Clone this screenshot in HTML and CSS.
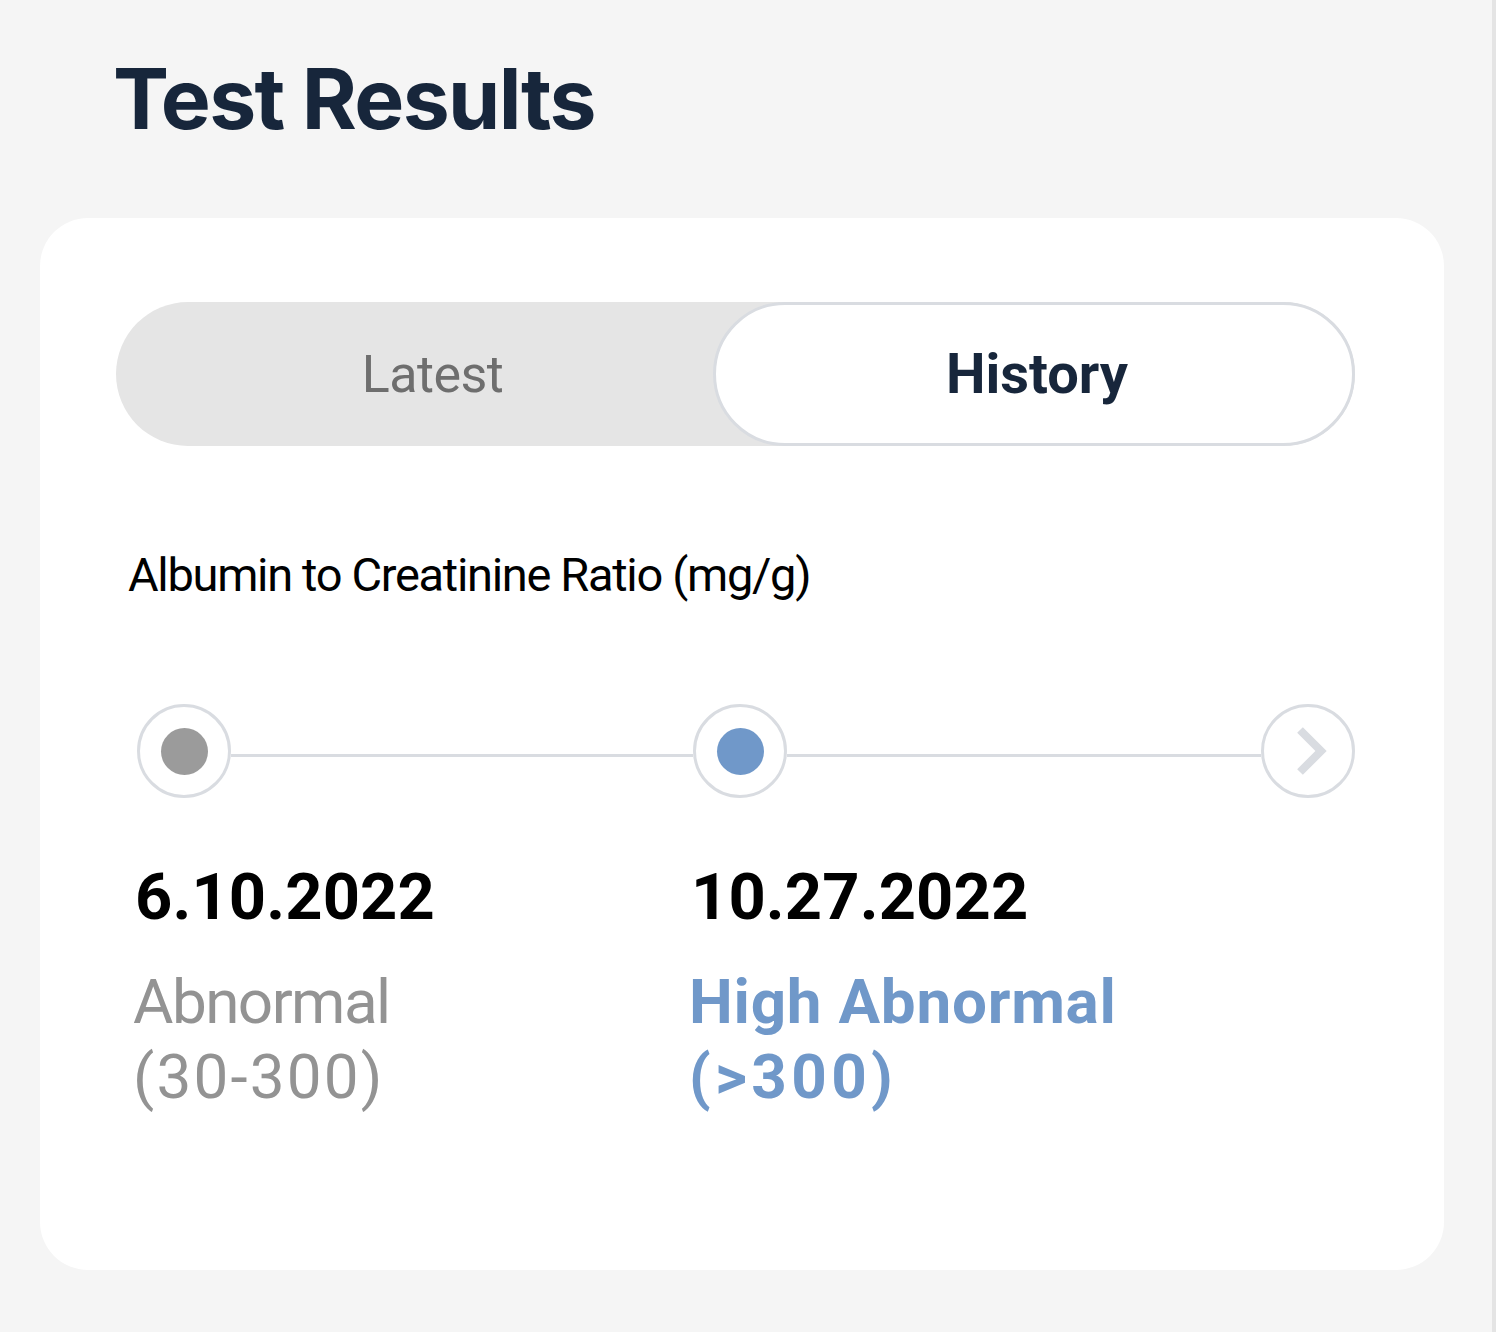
FILE: index.html
```html
<!DOCTYPE html>
<html lang="en">
<head>
<meta charset="utf-8">
<title>Test Results</title>
<link rel="stylesheet" href="styles.css">
</head>
<body>
<div class="page">
  <h1 class="title">Test Results</h1>
  <section class="card">
    <div class="toggle">
      <button class="tab">Latest</button>
      <button class="tab tab-active">History</button>
    </div>
    <p class="label">Albumin to Creatinine Ratio (mg/g)</p>
    <div class="timeline">
      <div class="node"><span class="dot dot-gray"></span></div>
      <div class="line line-first"></div>
      <div class="node"><span class="dot dot-blue"></span></div>
      <div class="line"></div>
      <div class="node node-next">
        <svg width="40" height="50" viewBox="0 0 40 50"><path d="M10 4 L31 25 L10 46" fill="none" stroke="#d9dce1" stroke-width="8"/></svg>
      </div>
    </div>
    <div class="results">
      <div class="result">
        <div class="date">6.10.2022</div>
        <div class="status">Abnormal<br><span class="range">(30-300)</span></div>
      </div>
      <div class="result">
        <div class="date">10.27.2022</div>
        <div class="status status-high">High Abnormal<br><span class="range range-high">(&gt;300)</span></div>
      </div>
    </div>
  </section>
</div>
</body>
</html>
```
FILE: styles.css
```css
html, body {
  margin: 0;
  padding: 0;
  background: #f5f5f5;
}
.page {
  box-sizing: border-box;
  min-height: 1332px;
  border-right: 4px solid #e4e4e4;
  padding: 57px 0 0 40px;
  font-family: Roboto, "Liberation Sans", sans-serif;
}
.title {
  margin: 0 0 77px 73px;
  font-family: Inter, Roboto, sans-serif;
  font-weight: 700;
  font-size: 84px;
  line-height: 1;
  letter-spacing: -0.02em;
  color: #17263b;
}
.card {
  box-sizing: border-box;
  width: 1404px;
  height: 1052px;
  background: #fff;
  border-radius: 48px;
  padding: 84px 89px 0 76px;
}
.toggle {
  display: flex;
  height: 144px;
  background: #e5e5e5;
  border-radius: 72px;
}
.tab {
  flex: 1;
  border: none;
  background: transparent;
  font-family: Roboto, sans-serif;
  font-size: 52px;
  font-weight: 400;
  color: #6e6e6e;
  padding: 0 0 0 36px;
  letter-spacing: -0.01em;
  cursor: pointer;
}
.tab-active {
  flex: 0 0 642px;
  box-sizing: border-box;
  background: #fff;
  border: 3px solid #d9dce1;
  border-radius: 72px;
  font-weight: 700;
  font-size: 56px;
  letter-spacing: 0;
  color: #17263b;
  padding: 0 0 0 6px;
}
.label {
  margin: 100px 0 0 12px;
  font-size: 47px;
  line-height: 58px;
  color: #000;
  letter-spacing: -0.028em;
}
.timeline {
  display: flex;
  align-items: center;
  margin: 100px 0 0 21px;
}
.node {
  box-sizing: border-box;
  flex: 0 0 94px;
  height: 94px;
  border: 3px solid #d9dce1;
  border-radius: 50%;
  display: flex;
  align-items: center;
  justify-content: center;
}
.dot {
  width: 47px;
  height: 47px;
  border-radius: 50%;
}
.dot-gray { background: #9b9b9b; }
.dot-blue { background: #7098c9; }
.line {
  flex: 1;
  height: 3px;
  margin-top: 9px;
  background: #d9dce1;
}
.line-first {
  flex: 0 0 462px;
}
.node-next svg {
  margin-left: 4px;
}
.results {
  display: grid;
  grid-template-columns: 556px 1fr;
  margin: 60px 0 0 19px;
}
.date {
  font-size: 65px;
  font-weight: 700;
  line-height: 1.2;
  color: #000;
  letter-spacing: 0.002em;
}
.status {
  margin: 28px 0 0 -2px;
  font-size: 62px;
  line-height: 75px;
  color: #939393;
  letter-spacing: -0.025em;
}
.range {
  letter-spacing: 0.035em;
}
.status-high {
  color: #7098c9;
  font-weight: 700;
  letter-spacing: 0.012em;
}
.range-high {
  letter-spacing: 0.07em;
}
```
